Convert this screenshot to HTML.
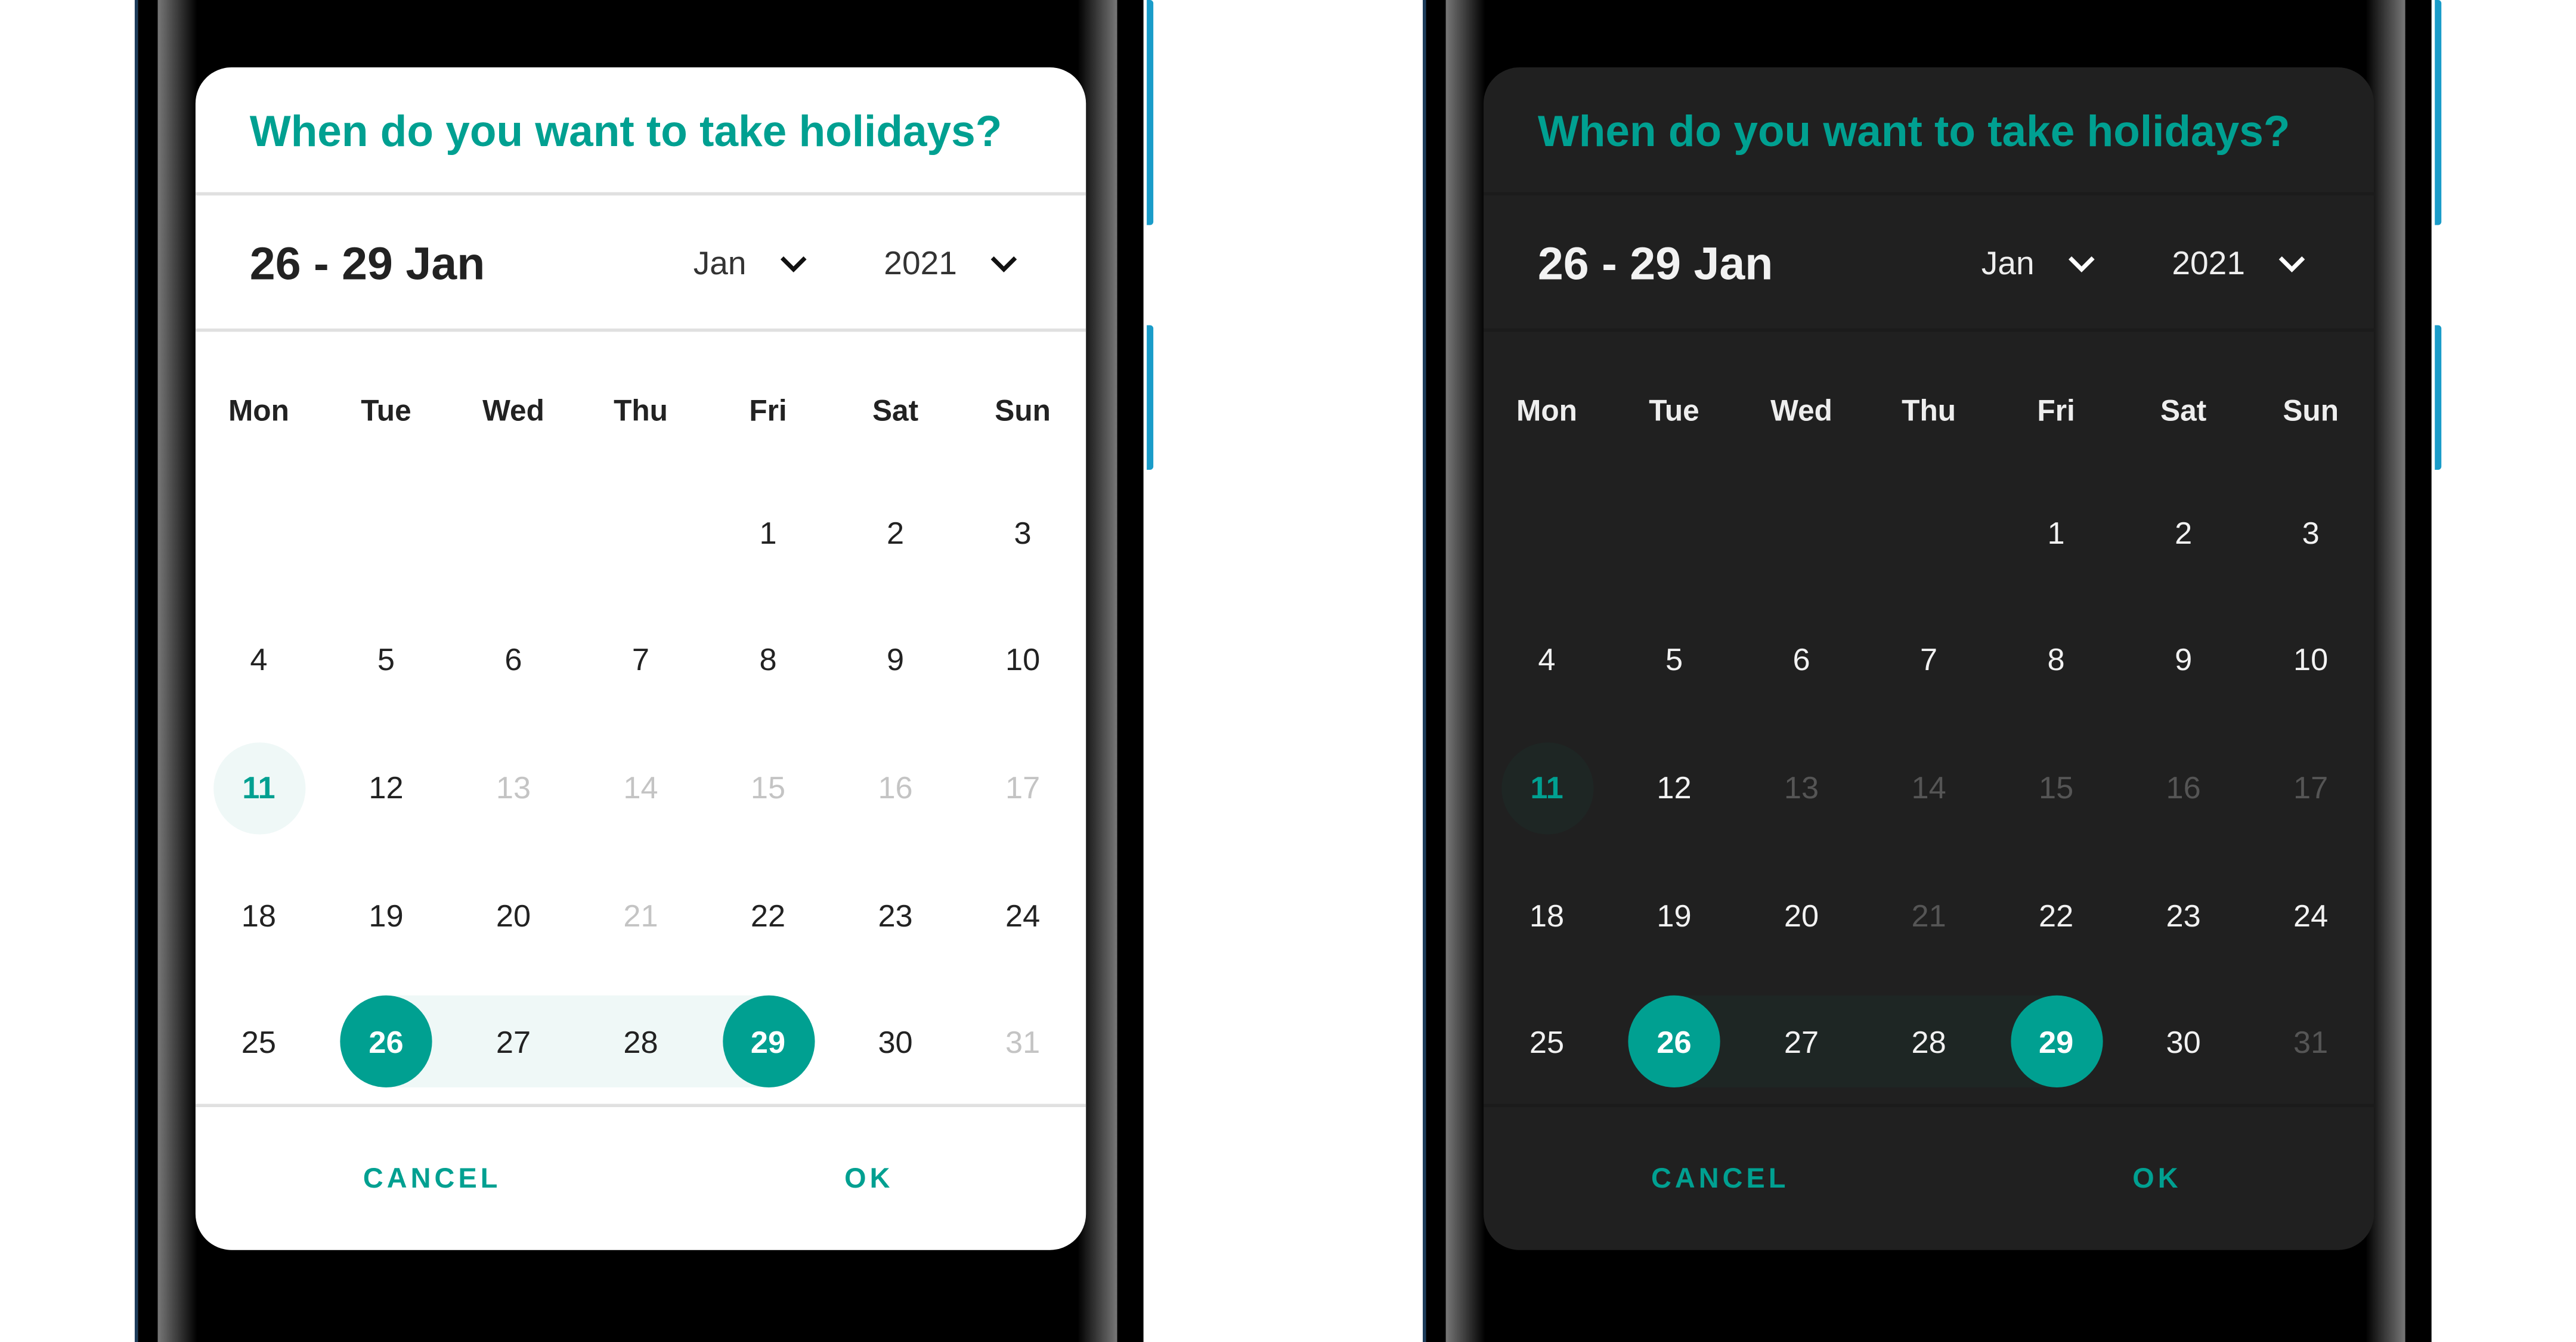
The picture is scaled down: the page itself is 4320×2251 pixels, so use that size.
<!DOCTYPE html>
<html><head><meta charset="utf-8"><style>
html,body{margin:0;padding:0;background:#fff;overflow:hidden;width:4320px;height:2251px}
#s{position:absolute;left:0;top:0;width:1568px;height:817px;transform:scale(2.7552);transform-origin:0 0;font-family:"Liberation Sans",Arial,sans-serif}
.a{position:absolute}
.phone{position:absolute;top:0;width:620px;height:817px}
.shadow{position:absolute;left:-6px;top:0;width:632px;height:817px;background:linear-gradient(90deg,rgba(0,0,0,0),rgba(0,0,0,.06) 40%,rgba(0,0,0,.06) 60%,rgba(0,0,0,0))}
.edgeL{position:absolute;left:0;top:0;width:1.5px;height:817px;background:#1d3c5a}
.body{position:absolute;left:1.5px;top:0;width:612px;height:817px;background:#000}
.gl{position:absolute;left:14px;top:0;width:24px;height:817px;background:linear-gradient(90deg,#777,#000)}
.gr{position:absolute;left:574px;top:0;width:24px;height:817px;background:linear-gradient(90deg,#000,#777)}
.blue{position:absolute;width:4px;background:#1a9cc9;left:616px;border-radius:0 2px 2px 0}
.dlg{position:absolute;left:37px;top:41px;width:542px;height:720px;border-radius:22px;overflow:hidden}
.title{position:absolute;left:33px;top:39px;font-size:26.5px;font-weight:bold;line-height:36px;margin-top:-18px;white-space:nowrap}
.div{position:absolute;left:0;width:542px;height:2px}
.big{position:absolute;left:33px;top:120px;margin-top:-17px;line-height:34px;font-size:28px;font-weight:bold;white-space:nowrap}
.dd{position:absolute;top:120px;margin-top:-12px;line-height:24px;font-size:20px;white-space:nowrap}
.chev{position:absolute;top:114px;width:18px;height:12px}
.c{position:absolute;width:60px;margin-left:-30px;text-align:center;font-size:19px;line-height:24px;margin-top:-12px}
.wd{font-weight:bold;font-size:18px}
.circ{position:absolute;width:56px;height:56px;border-radius:50%;margin-left:-28px;margin-top:-28px}
.btn{position:absolute;top:677px;margin-top:-11px;line-height:22px;font-size:17px;font-weight:bold;letter-spacing:2.2px;color:#00a091;white-space:nowrap}
</style></head><body><div id="s">

<div class="phone" style="left:82px">
 <div class="shadow"></div>
 <div class="edgeL"></div>
 <div class="body"></div>
 <div class="gl"></div><div class="gr"></div>
 <div class="blue" style="top:0;height:137px"></div>
 <div class="blue" style="top:198px;height:88px"></div>
 <div class="dlg" style="background:#fff">
  <div class="title" style="color:#00a091">When do you want to take holidays?</div>
  <div class="div" style="top:76px;background:#e0e0e0"></div>
  <div class="big" style="color:#222">26 - 29 Jan</div>
  <div class="dd" style="left:303px;color:#333">Jan</div>
  <svg class="chev" style="left:355px" viewBox="0 0 18 12"><path d="M2 2 L9 9 L16 2" fill="none" stroke="#111" stroke-width="2.6"/></svg>
  <div class="dd" style="left:419px;color:#333">2021</div>
  <svg class="chev" style="left:483px" viewBox="0 0 18 12"><path d="M2 2 L9 9 L16 2" fill="none" stroke="#111" stroke-width="2.6"/></svg>
  <div class="div" style="top:159px;background:#e0e0e0"></div>
  <div class="div" style="top:631px;background:#e0e0e0"></div>
  <div class="a" style="left:116px;top:565px;width:232px;height:56px;background:#eff8f7"></div>
  <div class="circ" style="left:39px;top:439px;background:#eff8f7"></div>
  <div class="circ" style="left:116px;top:593px;background:#00a091"></div>
  <div class="circ" style="left:349px;top:593px;background:#00a091"></div>
  <div class="btn" style="left:102px">CANCEL</div>
  <div class="btn" style="left:395px">OK</div>
  <div id="gridL"></div>
 </div>
</div>

<div class="phone" style="left:866px">
 <div class="shadow"></div>
 <div class="edgeL"></div>
 <div class="body"></div>
 <div class="gl"></div><div class="gr"></div>
 <div class="blue" style="top:0;height:137px"></div>
 <div class="blue" style="top:198px;height:88px"></div>
 <div class="dlg" style="background:#202020">
  <div class="title" style="color:#00a091">When do you want to take holidays?</div>
  <div class="div" style="top:76px;background:#1b1b1b"></div>
  <div class="big" style="color:#f2f2f2">26 - 29 Jan</div>
  <div class="dd" style="left:303px;color:#eee">Jan</div>
  <svg class="chev" style="left:355px" viewBox="0 0 18 12"><path d="M2 2 L9 9 L16 2" fill="none" stroke="#fff" stroke-width="2.6"/></svg>
  <div class="dd" style="left:419px;color:#eee">2021</div>
  <svg class="chev" style="left:483px" viewBox="0 0 18 12"><path d="M2 2 L9 9 L16 2" fill="none" stroke="#fff" stroke-width="2.6"/></svg>
  <div class="div" style="top:159px;background:#1b1b1b"></div>
  <div class="div" style="top:631px;background:#1b1b1b"></div>
  <div class="a" style="left:116px;top:565px;width:232px;height:56px;background:#1e2624"></div>
  <div class="circ" style="left:39px;top:439px;background:#1e2624"></div>
  <div class="circ" style="left:116px;top:593px;background:#00a091"></div>
  <div class="circ" style="left:349px;top:593px;background:#00a091"></div>
  <div class="btn" style="left:102px">CANCEL</div>
  <div class="btn" style="left:395px">OK</div>
  <div id="gridR"></div>
 </div>
</div>

</div>
<script>
(function(){
 var cols=[38.5,116,193.5,271,348.5,426,503.5];
 var rows=[284.5,362,439.5,517.5,594.5];
 var wd=["Mon","Tue","Wed","Thu","Fri","Sat","Sun"];
 function build(id,dark){
  var h="";
  var norm=dark?"#f2f2f2":"#222", dim=dark?"#555":"#c4c4c4", wc=dark?"#eee":"#222";
  for(var i=0;i<7;i++) h+='<div class="c wd" style="left:'+cols[i]+'px;top:209px;color:'+wc+'">'+wd[i]+'</div>';
  var dis={13:1,14:1,15:1,16:1,17:1,21:1,31:1};
  for(var d=1;d<=31;d++){
   var idx=d+3; var r=Math.floor(idx/7), c=idx%7;
   var col=norm, fw="normal";
   if(dis[d]) col=dim;
   if(d==11){col="#00a091";fw="bold";}
   if(d==26||d==29){col="#fff";fw="bold";}
   h+='<div class="c" style="left:'+cols[c]+'px;top:'+rows[r]+'px;color:'+col+';font-weight:'+fw+'">'+d+'</div>';
  }
  document.getElementById(id).outerHTML=h;
 }
 build("gridL",false);build("gridR",true);
})();
</script>
</body></html>
